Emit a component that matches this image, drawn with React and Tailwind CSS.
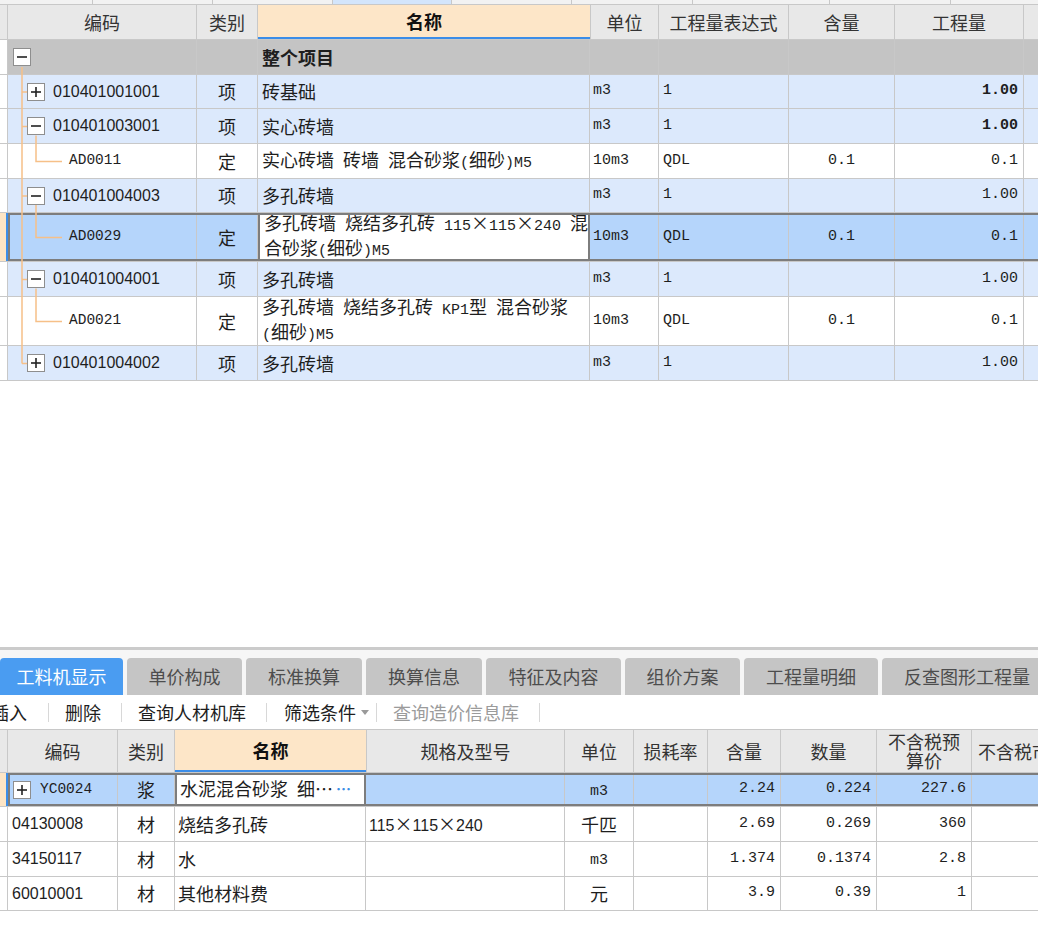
import React from "react";

const CJK_RE = /([\u00d7\u2026\u3000-\u9fff\uff00-\uffef]+)/;
const IS_CJK = /[\u00d7\u2026\u3000-\u9fff\uff00-\uffef]/;

// split mixed text: CJK in Noto, latin half-width in mono (like SimSun)
function Txt({ s, sans }) {
  return (
    <span>
      {s.split(CJK_RE).map((p, i) =>
        !p ? null : IS_CJK.test(p) ? (
          <span key={i} className="font-['Noto_Sans_CJK_SC',sans-serif] text-[18px]">
            {p}
          </span>
        ) : sans ? (
          <span key={i} className="font-['Liberation_Sans',Arial,sans-serif] text-[16px]">
            {p}
          </span>
        ) : (
          <span key={i} className="font-['Liberation_Mono',monospace] text-[15px]">
            {p}
          </span>
        )
      )}
    </span>
  );
}

function Num({ v, bold }) {
  return (
    <span className={`font-['Liberation_Mono',monospace] text-[15px] ${bold ? "font-bold" : ""}`}>
      {v}
    </span>
  );
}

function Box({ plus }) {
  return (
    <svg width="18" height="18" viewBox="0 0 18 18" className="shrink-0">
      <rect x="0.5" y="0.5" width="17" height="17" fill="#fff" stroke="#8e8e8e" />
      <path d="M4 9H14" stroke="#222" strokeWidth="1.6" />
      {plus && <path d="M9 4V14" stroke="#222" strokeWidth="1.6" />}
    </svg>
  );
}

const topRows = [
  { h: "h-[35px]", bg: "bg-[#c4c4c4]", lvl: 0, box: "-", code: "", kind: "", name: "整个项目", bold: true },
  { h: "h-[34px]", bg: "bg-[#dce9fc]", lvl: 1, box: "+", code: "010401001001", kind: "项", name: "砖基础", unit: "m3", expr: "1", qty: "1.00", qb: true },
  { h: "h-[35px]", bg: "bg-[#dce9fc]", lvl: 1, box: "-", code: "010401003001", kind: "项", name: "实心砖墙", unit: "m3", expr: "1", qty: "1.00", qb: true },
  { h: "h-[35px]", bg: "bg-white", lvl: 2, code: "AD0011", mono: true, kind: "定", name: "实心砖墙 砖墙 混合砂浆(细砂)M5", unit: "10m3", expr: "QDL", hl: "0.1", qty: "0.1" },
  { h: "h-[34px]", bg: "bg-[#dce9fc]", lvl: 1, box: "-", code: "010401004003", kind: "项", name: "多孔砖墙", unit: "m3", expr: "1", qty: "1.00" },
  { h: "h-[49px]", bg: "bg-[#b5d5fb]", sel: true, lvl: 2, code: "AD0029", mono: true, kind: "定", name: ["多孔砖墙 烧结多孔砖 115×115×240 混", "合砂浆(细砂)M5"], unit: "10m3", expr: "QDL", hl: "0.1", qty: "0.1" },
  { h: "h-[35px]", bg: "bg-[#dce9fc]", lvl: 1, box: "-", code: "010401004001", kind: "项", name: "多孔砖墙", unit: "m3", expr: "1", qty: "1.00" },
  { h: "h-[49px]", bg: "bg-white", lvl: 2, code: "AD0021", mono: true, kind: "定", name: ["多孔砖墙 烧结多孔砖 KP1型 混合砂浆", "(细砂)M5"], unit: "10m3", expr: "QDL", hl: "0.1", qty: "0.1" },
  { h: "h-[35px]", bg: "bg-[#dce9fc]", lvl: 1, box: "+", code: "010401004002", kind: "项", name: "多孔砖墙", unit: "m3", expr: "1", qty: "1.00" },
];

function TopRow({ r }) {
  const pad = r.lvl === 0 ? "pl-[5px]" : r.lvl === 1 ? "pl-[19px]" : "pl-[61px]";
  return (
    <div className={`flex ${r.h} border-b border-[#c8c8c8]`}>
      <div
        className={`w-[8px] shrink-0 ${
          r.sel ? "bg-[#fde5c5] border-r-2 border-[#3b8de8]" : "bg-white border-r border-[#c8c8c8]"
        }`}
      />
      <div className={`flex ${r.bg} ${r.sel ? "outline-2 -outline-offset-2 outline-[#7d7d7d]" : ""}`}>
        <div className={`w-[189px] shrink-0 border-r border-[#c8c8c8] flex items-center ${pad}`}>
          {r.box && <Box plus={r.box === "+"} />}
          {r.code &&
            (r.mono ? (
              <span className="font-['Liberation_Mono',monospace] text-[14.5px]">{r.code}</span>
            ) : (
              <span className="ml-[8px] font-['Liberation_Sans',Arial,sans-serif] text-[16px]">{r.code}</span>
            ))}
        </div>
        <div className="w-[61px] shrink-0 border-r border-[#c8c8c8] flex items-center justify-center">
          <Txt s={r.kind} />
        </div>
        <div
          className={`w-[332px] shrink-0 flex items-center pl-[4px] whitespace-nowrap leading-[20px] ${
            r.sel ? "bg-white border-x-2 border-[#7d7d7d]" : "border-r border-[#c8c8c8]"
          } ${r.bold ? "font-bold" : ""}`}
        >
          {Array.isArray(r.name) ? (
            <div>
              <div>
                <Txt s={r.name[0]} />
              </div>
              <div>
                <Txt s={r.name[1]} />
              </div>
            </div>
          ) : (
            <Txt s={r.name} />
          )}
        </div>
        <div className="w-[69px] shrink-0 border-r border-[#c8c8c8] flex items-center pl-[3px]">
          {r.unit && <Num v={r.unit} />}
        </div>
        <div className="w-[130px] shrink-0 border-r border-[#c8c8c8] flex items-center pl-[4px]">
          {r.expr && <Num v={r.expr} />}
        </div>
        <div className="w-[106px] shrink-0 border-r border-[#c8c8c8] flex items-center justify-center">
          {r.hl && <Num v={r.hl} />}
        </div>
        <div className="w-[129px] shrink-0 border-r border-[#c8c8c8] flex items-center justify-end pr-[5px]">
          {r.qty && <Num v={r.qty} bold={r.qb} />}
        </div>
        <div className="w-[40px] shrink-0" />
      </div>
    </div>
  );
}

const tabs = [
  ["工料机显示", "w-[123px]"],
  ["单价构成", "w-[115px]"],
  ["标准换算", "w-[116px]"],
  ["换算信息", "w-[116px]"],
  ["特征及内容", "w-[135px]"],
  ["组价方案", "w-[115px]"],
  ["工程量明细", "w-[134px]"],
  ["反查图形工程量", "w-[170px]"],
];

const botRows = [
  { h: "h-[34px]", sel: true, code: "YC0024", kind: "浆", name: "水泥混合砂浆 细…", spec: "", unit: "m3", hl: "2.24", qty: "0.224", price: "227.6" },
  { h: "h-[35px]", code: "04130008", kind: "材", name: "烧结多孔砖", spec: "115×115×240", unit: "千匹", hl: "2.69", qty: "0.269", price: "360" },
  { h: "h-[35px]", code: "34150117", kind: "材", name: "水", spec: "", unit: "m3", hl: "1.374", qty: "0.1374", price: "2.8" },
  { h: "h-[34px]", code: "60010001", kind: "材", name: "其他材料费", spec: "", unit: "元", hl: "3.9", qty: "0.39", price: "1" },
];

function BotRow({ r }) {
  return (
    <div className={`flex ${r.h} border-b border-[#c8c8c8]`}>
      <div
        className={`w-[8px] shrink-0 ${
          r.sel ? "bg-[#fde5c5] border-r-2 border-[#3b8de8]" : "bg-white border-r border-[#c8c8c8]"
        }`}
      />
      <div className={`flex ${r.sel ? "bg-[#b5d5fb] outline-2 -outline-offset-2 outline-[#7d7d7d]" : "bg-white"}`}>
        <div className={`w-[110px] shrink-0 border-r border-[#c8c8c8] flex items-center ${r.sel ? "pl-[5px]" : "pl-[4px]"}`}>
          {r.sel ? (
            <>
              <Box plus />
              <span className="ml-[9px] font-['Liberation_Mono',monospace] text-[14.5px]">{r.code}</span>
            </>
          ) : (
            <span className="font-['Liberation_Sans',Arial,sans-serif] text-[16px]">{r.code}</span>
          )}
        </div>
        <div className="w-[57px] shrink-0 border-r border-[#c8c8c8] flex items-center justify-center">
          <Txt s={r.kind} />
        </div>
        <div
          className={`w-[191px] shrink-0 flex items-center pl-[3px] whitespace-nowrap ${
            r.sel ? "bg-white border-x-2 border-[#7d7d7d]" : "border-r border-[#c8c8c8]"
          }`}
        >
          <Txt s={r.name} />
          {r.sel && (
            <span className="ml-[3px] font-['Noto_Sans_CJK_SC',sans-serif] text-[15px] font-bold text-[#3a8ee6]">…</span>
          )}
        </div>
        <div className="w-[199px] shrink-0 border-r border-[#c8c8c8] flex items-center pl-[3px] whitespace-nowrap">
          <Txt s={r.spec} sans />
        </div>
        <div className="w-[69px] shrink-0 border-r border-[#c8c8c8] flex items-center justify-center">
          <Txt s={r.unit} />
        </div>
        <div className="w-[74px] shrink-0 border-r border-[#c8c8c8]" />
        <div className="w-[73px] shrink-0 border-r border-[#c8c8c8] flex items-center justify-end pr-[5px]">
          <Num v={r.hl} />
        </div>
        <div className="w-[96px] shrink-0 border-r border-[#c8c8c8] flex items-center justify-end pr-[5px]">
          <Num v={r.qty} />
        </div>
        <div className="w-[95px] shrink-0 border-r border-[#c8c8c8] flex items-center justify-end pr-[5px]">
          <Num v={r.price} />
        </div>
        <div className="w-[120px] shrink-0" />
      </div>
    </div>
  );
}

export default function App() {
  return (
    <div className="w-[1038px] h-[930px] overflow-hidden bg-white text-[#1e1e1e] font-['Noto_Sans_CJK_SC',sans-serif]">
      {/* upper grid */}
      <div className="relative">
        <div className="flex h-[5px] bg-[#f2f2f2] border-b border-[#c8c8c8]">
          <div className="w-[93px] shrink-0 border-r border-[#c8c8c8]" />
          <div className="w-[120px] shrink-0 border-r border-[#c8c8c8]" />
          <div className="w-[120px] shrink-0 border-r border-[#c8c8c8]" />
          <div className="w-[119px] shrink-0 border-r border-[#c8c8c8] bg-[#d3e5fb]" />
          <div className="w-[120px] shrink-0 border-r border-[#c8c8c8]" />
          <div className="w-[121px] shrink-0 border-r border-[#c8c8c8]" />
          <div className="w-[137px] shrink-0 border-r border-[#c8c8c8]" />
          <div className="w-[121px] shrink-0 border-r border-[#c8c8c8]" />
          <div className="flex-1" />
        </div>
        <div className="flex h-[35px] bg-[#e8e8e8] border-b border-[#c8c8c8] text-[18px] text-[#333]">
          <div className="w-[8px] shrink-0 border-r border-[#c8c8c8]" />
          <div className="w-[189px] shrink-0 border-r border-[#c8c8c8] flex items-center justify-center">编码</div>
          <div className="w-[61px] shrink-0 border-r border-[#c8c8c8] flex items-center justify-center">类别</div>
          <div className="w-[332px] shrink-0 bg-[#fde6c8] border-b-2 border-[#3b8de8] flex items-center justify-center font-bold text-[#111]">
            名称
          </div>
          <div className="w-[69px] shrink-0 border-x border-[#c8c8c8] flex items-center justify-center">单位</div>
          <div className="w-[130px] shrink-0 border-r border-[#c8c8c8] flex items-center justify-center">工程量表达式</div>
          <div className="w-[106px] shrink-0 border-r border-[#c8c8c8] flex items-center justify-center">含量</div>
          <div className="w-[129px] shrink-0 border-r border-[#c8c8c8] flex items-center justify-center">工程量</div>
          <div className="flex-1" />
        </div>
        {topRows.map((r, i) => (
          <TopRow key={i} r={r} />
        ))}
        {/* tree connectors */}
        <svg className="absolute left-0 top-0 pointer-events-none" width="70" height="381">
          <path
            d="M22 67V363.5M22 92H27M22 126.5H27M22 196H27M22 279.5H27M22 363.5H27M36 135.5V161.5H62M36 205V237.5H62M36 288.5V321.5H62"
            fill="none"
            stroke="#f6c088"
            strokeWidth="1.5"
          />
        </svg>
      </div>

      <div className="h-[266px]" />

      {/* lower panel */}
      <div className="h-[3px] bg-[#cbcbcb]" />
      <div className="bg-[#f6f6f6] pt-[8px] flex gap-[4px] whitespace-nowrap">
        {tabs.map(([t, w], i) => (
          <div
            key={t}
            className={`${w} shrink-0 h-[37px] rounded-t-[4px] flex items-center justify-center text-[18px] ${
              i === 0 ? "bg-[#4a9cf1] text-white" : "bg-[#c5c5c5] text-[#4d4d4d]"
            }`}
          >
            {t}
          </div>
        ))}
      </div>
      <div className="h-[34px] flex items-center text-[18px] whitespace-nowrap bg-white">
        <span className="-ml-[9px]">插入</span>
        <span className="ml-[21px] w-px h-[19px] bg-[#d8d8d8]" />
        <span className="ml-[16px]">删除</span>
        <span className="ml-[20px] w-px h-[19px] bg-[#d8d8d8]" />
        <span className="ml-[16px]">查询人材机库</span>
        <span className="ml-[20px] w-px h-[19px] bg-[#d8d8d8]" />
        <span className="ml-[17px]">筛选条件</span>
        <svg className="ml-[5px]" width="8" height="5" viewBox="0 0 8 5">
          <path d="M0 0H8L4 5Z" fill="#9a9a9a" />
        </svg>
        <span className="ml-[7px] w-px h-[19px] bg-[#d8d8d8]" />
        <span className="ml-[16px] text-[#9b9b9b]">查询造价信息库</span>
        <span className="ml-[20px] w-px h-[19px] bg-[#d8d8d8]" />
      </div>
      <div className="flex h-[44px] bg-[#e8e8e8] border-y border-[#c8c8c8] text-[18px] text-[#333]">
        <div className="w-[8px] shrink-0 border-r border-[#c8c8c8]" />
        <div className="w-[110px] shrink-0 border-r border-[#c8c8c8] flex items-center justify-center">编码</div>
        <div className="w-[57px] shrink-0 border-r border-[#c8c8c8] flex items-center justify-center">类别</div>
        <div className="w-[191px] shrink-0 bg-[#fde6c8] border-b-2 border-[#3b8de8] flex items-center justify-center font-bold text-[#111]">
          名称
        </div>
        <div className="w-[199px] shrink-0 border-x border-[#c8c8c8] flex items-center justify-center">规格及型号</div>
        <div className="w-[69px] shrink-0 border-r border-[#c8c8c8] flex items-center justify-center">单位</div>
        <div className="w-[74px] shrink-0 border-r border-[#c8c8c8] flex items-center justify-center">损耗率</div>
        <div className="w-[73px] shrink-0 border-r border-[#c8c8c8] flex items-center justify-center">含量</div>
        <div className="w-[96px] shrink-0 border-r border-[#c8c8c8] flex items-center justify-center">数量</div>
        <div className="w-[95px] shrink-0 border-r border-[#c8c8c8] flex items-center justify-center text-center leading-[19px]">
          不含税预
          <br />
          算价
        </div>
        <div className="w-[120px] shrink-0 flex items-center justify-center whitespace-nowrap">不含税市场价</div>
      </div>
      {botRows.map((r, i) => (
        <BotRow key={i} r={r} />
      ))}
    </div>
  );
}
